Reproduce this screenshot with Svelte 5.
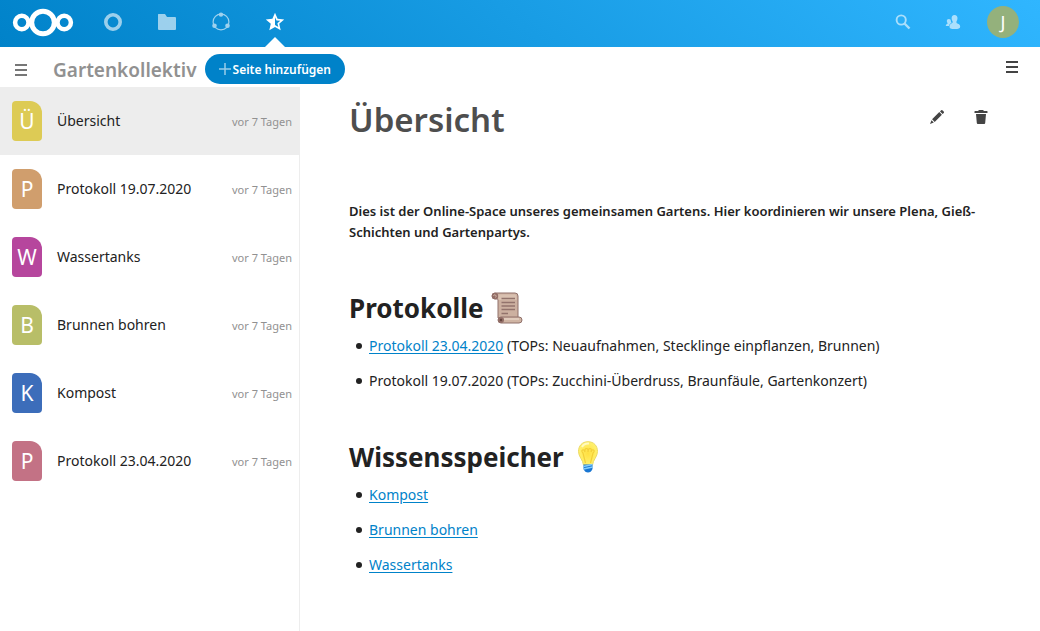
<script>
  const pages = [
    { title: 'Übersicht', color: '#ddcb55', active: true },
    { title: 'Protokoll 19.07.2020', color: '#d09e6d' },
    { title: 'Wassertanks', color: '#b6469d' },
    { title: 'Brunnen bohren', color: '#b8be68' },
    { title: 'Kompost', color: '#3c6dba' },
    { title: 'Protokoll 23.04.2020', color: '#c37285' }
  ];
  const knowledge = ['Kompost', 'Brunnen bohren', 'Wassertanks'];
</script>

<header>
  <a class="logo" href="#home" aria-label="Nextcloud">
    <svg width="62" height="30" viewBox="0 0 62 30" fill="none" stroke="#fff">
      <circle cx="31" cy="14.500" r="11.300" stroke-width="5" />
      <circle cx="9.800" cy="14.500" r="6.700" stroke-width="4.500" />
      <circle cx="52.200" cy="14.500" r="6.700" stroke-width="4.500" />
    </svg>
  </a>
  <nav class="apps" aria-label="Apps">
    <a href="#dashboard" aria-label="Dashboard">
      <svg width="20" height="20" viewBox="0 0 20 20"><circle cx="10" cy="10" r="7.200" fill="none" stroke="#fff" stroke-width="3.600" /></svg>
    </a>
    <a href="#files" aria-label="Dateien">
      <svg width="20" height="20" viewBox="0 0 20 20"><path d="M1.500 2h6.500l2 3h8q1 0 1 1v11q0 1-1 1H2q-1 0-1-1V2.500q0-.5.5-.5z" fill="#fff" /></svg>
    </a>
    <a href="#circles" aria-label="Kreise">
      <svg width="20" height="20" viewBox="0 0 20 20" fill="#fff">
        <circle cx="10" cy="10" r="7.900" fill="none" stroke="#fff" stroke-width="1.200" />
        <circle cx="10" cy="2.600" r="2.200" /><circle cx="3.500" cy="13.700" r="2.300" /><circle cx="16.500" cy="13.700" r="2.300" />
      </svg>
    </a>
    <a class="current" href="#collectives" aria-label="Kollektive">
      <svg width="20" height="20" viewBox="0 0 20 20"><path fill="#fff" fill-rule="evenodd" d="M10 .8l2.600 6 6.600.6-5 4.400 1.500 6.500L10 15l-5.700 3.300 1.500-6.500-5-4.400 6.600-.6zM10 5.200v7.900l3.300 1.900-.9-3.800 2.900-2.500-3.800-.3z" /></svg>
    </a>
  </nav>
  <div class="tools">
    <button aria-label="Suche">
      <svg width="16" height="16" viewBox="0 0 16 16" fill="none" stroke="#fff"><circle cx="6.200" cy="6" r="4.600" stroke-width="1.900" /><path d="M9.500 9.500l5 5" stroke-width="2.400" /></svg>
    </button>
    <button aria-label="Kontakte">
      <svg width="16" height="16" viewBox="0 0 16 16" fill="#fff">
        <path d="M9.500 1C7.500 1 6.600 2.400 6.600 4.200c0 1.300.4 2.300 1 3v1.600C5.700 9.700 4.500 10.400 4.500 12.400c0 2 1.400 2.700 5.200 2.700s5.500-.7 5.500-2.700c0-2-1.800-2.600-3.700-3.500V7.200c.6-.7 1-1.700 1-3C12.500 2.400 11.500 1 9.500 1z" />
        <path d="M3.700 5c-1.200 0-1.900.9-1.900 2.100 0 .8.200 1.400.7 1.900v.8C1.300 10.300.8 10.800.8 12h3.200c.3-1.600 1.400-2.600 2.600-3.200C6.100 8.200 5.700 7 5.700 5.800 5.200 5.300 4.600 5 3.700 5z" />
      </svg>
    </button>
    <button class="user" aria-label="Einstellungen">J</button>
  </div>
</header>

<div class="toolbar">
  <button class="icon menu" aria-label="Navigation öffnen">
    <svg width="12" height="12" viewBox="0 0 12 12"><path d="M0 1h12M0 6h12M0 11h12" stroke="currentColor" stroke-width="2" /></svg>
  </button>
  <h2>Gartenkollektiv</h2>
  <button class="add">
    <svg width="12" height="12" viewBox="0 0 12 12"><path d="M6 0v12M0 6h12" stroke="#fff" stroke-opacity=".6" stroke-width="1.500" /></svg>
    Seite hinzufügen
  </button>
  <button class="icon details" aria-label="Seitenleiste öffnen">
    <svg width="12" height="12" viewBox="0 0 12 12"><path d="M0 1h12M0 6h12M0 11h12" stroke="currentColor" stroke-width="2" /></svg>
  </button>
</div>

<div class="body">
  <nav class="pages" aria-label="Seiten">
    {#each pages as page}
      <a class="page" class:active={page.active} href="#page">
        <span class="tile" style="background: {page.color}">{page.title[0]}</span>
        <span class="name">{page.title}</span>
        <time>vor 7 Tagen</time>
      </a>
    {/each}
  </nav>

  <main>
    <div class="title">
      <h1>Übersicht</h1>
      <button class="icon" aria-label="Bearbeiten">
        <svg width="16" height="16" viewBox="0 0 16 16" fill="currentColor"><path d="M12.200 1.300q.7-.6 1.500.1l1 1q.7.8.1 1.500L13.600 5 11 2.400zM10.300 3.100l2.600 2.600-7.200 7.200-2.600-2.600zM2.500 11.200l2.300 2.300L1 15z" /></svg>
      </button>
      <button class="icon" aria-label="Löschen">
        <svg width="16" height="16" viewBox="0 0 16 16" fill="currentColor"><path d="M6 1h4l1 1h3q.5 0 .5.5V4h-13V2.500Q1.500 2 2 2h3zM3 5h10l-.8 9q-.1 1-1 1H4.800q-.9 0-1-1z" /></svg>
      </button>
    </div>
    <article>
      <p>Dies ist der Online-Space unseres gemeinsamen Gartens. Hier koordinieren wir unsere Plena, Gieß-Schichten und Gartenpartys.</p>
      <h2>
        Protokolle
        <svg width="32" height="32" viewBox="0 0 32 32" aria-hidden="true">
          <path d="M4 1h20q3 0 3 3v22H7V7H4Q1 7 1 4t3-3z" fill="#ccb0a0" stroke="#90716b" />
          <path d="M7 2.500h17q1.500 0 1.500 2V8h-18z" fill="#d9c1b1" />
          <circle cx="4" cy="4" r="3.200" fill="#926e67" /><path d="M2.500 4q.5-2 2-1t0 2.500" fill="none" stroke="#cfb2a4" />
          <path d="M10.500 6.500H24M10.500 10.500H24M10.500 14H24M10.500 17.500H24M10.500 21.500H17" stroke="#92736c" stroke-width="1.300" />
          <path d="M10 25h18q3 0 3 3t-3 3H10q-3 0-3-3t3-3z" fill="#d0b5a4" stroke="#90716b" />
          <path d="M13 27h15" stroke="#e0cabb" stroke-width="2" />
          <circle cx="10" cy="28" r="3" fill="#926e67" /><circle cx="10" cy="28" r="1.200" fill="#65453f" />
        </svg>
      </h2>
      <ul>
        <li><span><a href="#protokoll">Protokoll 23.04.2020</a> (TOPs: Neuaufnahmen, Stecklinge einpflanzen, Brunnen)</span></li>
        <li><span>Protokoll 19.07.2020 (TOPs: Zucchini-Überdruss, Braunfäule, Gartenkonzert)</span></li>
      </ul>
      <h2>
        Wissensspeicher
        <svg width="32" height="32" viewBox="0 0 32 32" aria-hidden="true">
          <defs><radialGradient id="glow"><stop stop-color="#ffdf40" /><stop offset="1" stop-color="#fff16e" /></radialGradient></defs>
          <path d="M16 .7C10 .7 6.500 5 6.500 10.500c0 5 4.500 8.500 5 13.500h9c.5-5 5-8.500 5-13.500C25.500 5 22 .7 16 .7z" fill="url(#glow)" stroke="#edda63" />
          <path d="M10 6q2-4 7-3.500" fill="none" stroke="#fffac0" stroke-width="2" />
          <path d="M13.500 22L11 12q-2-2-.5-3t2.500 2q-.5-3.500 1.500-3.500T16 11q0-3.500 2-3.500T19 11q1-3 2.500-2T21 12l-2.500 10" fill="none" stroke="#f3cf38" stroke-width="1.200" />
          <path d="M11.500 23.500h9V28q-1.500 3.500-4.500 3.500T11.500 28z" fill="#1976d2" />
          <path d="M11.500 25.500l9-2M11.500 28l9-2" stroke="#83cdfc" stroke-width="1.500" />
        </svg>
      </h2>
      <ul>
        {#each knowledge as topic}
          <li><a href="#topic">{topic}</a></li>
        {/each}
      </ul>
    </article>
  </main>
</div>

<style>
  :global(body) {
    margin: 0;
    background: #fff;
    color: #222;
    font: 14px/21px 'Noto Sans', sans-serif;
  }
  :global(#app) {
    min-height: 100vh;
    display: flex;
    flex-direction: column;
  }
  h1, h2, p, ul { margin: 0; }
  h1, h2 { font-weight: 600; }
  svg { display: block; flex: none; }
  button {
    border: 0;
    padding: 0;
    background: none;
    color: inherit;
    font: inherit;
    cursor: pointer;
  }
  header {
    display: flex;
    align-items: center;
    height: 47px;
    background: linear-gradient(40deg, #0082c9 0%, #30b6ff 100%);
  }
  .logo { padding: 0 12px 2px; }
  .apps { display: flex; align-self: stretch; }
  .apps a {
    position: relative;
    display: flex;
    justify-content: center;
    width: 54px;
    padding-top: 12px;
    box-sizing: border-box;
  }
  .apps svg { opacity: .6; }
  .apps .current svg { opacity: 1; }
  .current::after {
    content: '';
    position: absolute;
    bottom: 0;
    left: 17px;
    border: 10px solid transparent;
    border-top: 0;
    border-bottom-color: #fff;
  }
  .tools {
    display: flex;
    align-items: center;
    margin-left: auto;
    padding: 0 21px 3px 0;
  }
  .tools button { display: grid; place-items: center; width: 50px; height: 32px; }
  .tools svg { opacity: .6; }
  .tools .user {
    width: 32px;
    margin-left: 9px;
    border-radius: 50%;
    background: #94b17c;
    color: #fff;
    font-size: 18px;
  }
  .toolbar { display: flex; align-items: center; height: 40px; }
  .icon {
    display: grid;
    place-items: center;
    width: 44px;
    height: 44px;
    color: #444;
  }
  .toolbar .icon { height: 40px; }
  .toolbar .menu { width: 42px; padding-top: 6px; color: #777; }
  .toolbar h2 {
    padding: 6px 8px 0 11px;
    color: #919191;
    font-size: 19px;
    line-height: 30px;
  }
  .add {
    display: flex;
    align-items: center;
    gap: 2px;
    height: 30px;
    margin-top: 4px;
    padding: 0 14px;
    border-radius: 15px;
    background: #0082c9;
    color: #fff;
    font-size: 12px;
    font-weight: 600;
    white-space: nowrap;
  }
  .details { margin: 0 6px 0 auto; }
  .body { display: flex; flex: 1; }
  .pages {
    flex: none;
    width: 299px;
    border-right: 1px solid #ededed;
  }
  .page {
    display: flex;
    align-items: center;
    height: 68px;
    padding: 0 7px 0 12px;
    box-sizing: border-box;
    color: #222;
    text-decoration: none;
  }
  .page.active { background: #ededed; }
  .tile {
    width: 30px;
    border-radius: 4px 12px 4px 4px;
    color: #fff;
    font-size: 21px;
    line-height: 40px;
    text-align: center;
  }
  .name { flex: 1; padding: 0 0 2px 15px; }
  time { color: #919191; font-size: 11px; }
  main { flex: 1; min-width: 0; padding: 8px 37px 40px 49px; }
  .title { display: flex; align-items: flex-start; }
  h1 {
    flex: 1;
    color: #4e4e4e;
    font-size: 33px;
    line-height: 50px;
  }
  article { padding-top: 56px; }
  p { max-width: 640px; font-size: 13px; font-weight: 600; }
  article h2 {
    display: flex;
    align-items: center;
    gap: 8px;
    margin-top: 48px;
    font-size: 26px;
    font-weight: 700;
    line-height: 34px;
  }
  ul + h2 { margin-top: 42px; }
  ul { padding: 3px 0 0 7px; list-style: none; }
  li { display: flex; gap: 7px; padding: 7px 0; }
  li::before {
    content: '';
    flex: none;
    width: 6px;
    height: 6px;
    margin-top: 8px;
    border-radius: 50%;
    background: #222;
  }
  li a { color: #0082c9; text-underline-offset: 2px; }
</style>
